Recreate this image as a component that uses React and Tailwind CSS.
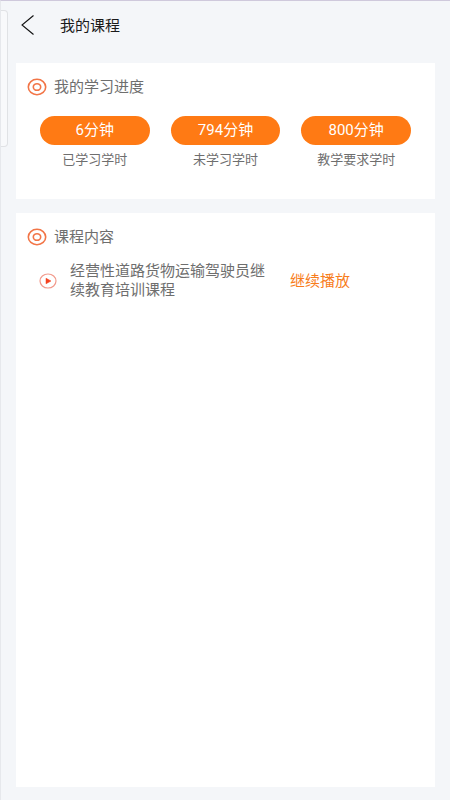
const stats = [
  { value: '6分钟', label: '已学习学时' },
  { value: '794分钟', label: '未学习学时' },
  { value: '800分钟', label: '教学要求学时' },
]

const courses = [{ id: 1, title: '经营性道路货物运输驾驶员继续教育培训课程' }]

function BackIcon() {
  return (
    <svg width="14" height="22" viewBox="0 0 14 22" fill="none" stroke="#111" strokeWidth="1.1" aria-hidden="true">
      <path d="M12.5 1.5 1 11l11.5 9.5" />
    </svg>
  )
}

function TargetIcon() {
  return (
    <svg width="20" height="18" viewBox="0 0 20 18" fill="none" stroke="#f27547" strokeWidth="1.6" aria-hidden="true">
      <ellipse cx="10" cy="9" rx="8.7" ry="7.7" />
      <ellipse cx="10" cy="9" rx="3.7" ry="3.3" />
    </svg>
  )
}

function PlayIcon() {
  return (
    <svg className="shrink-0" width="18" height="16" viewBox="0 0 18 16" aria-hidden="true">
      <ellipse cx="9" cy="8" rx="8" ry="7" fill="none" stroke="#f29a8c" strokeWidth="1.2" />
      <path d="M7 5.2v5.6L12 8z" fill="#f5411f" stroke="#f5411f" strokeWidth="0.5" strokeLinejoin="round" />
    </svg>
  )
}

function SectionTitle({ children }) {
  return (
    <div className="flex items-center gap-[7px] text-[#6e6e6e]">
      <TargetIcon />
      <h2 className="text-[15px] leading-5">{children}</h2>
    </div>
  )
}

export default function App() {
  return (
    <div className="relative flex min-h-screen flex-col border-t border-l border-t-[#cfc9dc] border-l-[#e6e8ec] bg-[#f4f6f9] pr-[15px] pb-[13px] pl-[15px] font-['Roboto','Noto_Sans_CJK_SC',sans-serif]">
      {/* edge panel handle */}
      <div className="absolute top-[9px] left-0 h-[137px] w-[7px] rounded-r-[4px] border border-l-0 border-[#e0e2e5] bg-[#f8f9fb]" />

      <header className="flex h-[62px] items-start gap-[25px] pt-[13px] pl-[5px]">
        <button type="button" aria-label="返回" className="flex h-[22px] items-center">
          <BackIcon />
        </button>
        <h1 className="text-[15px] leading-6 text-[#1a1a1a]">我的课程</h1>
      </header>

      <main className="flex flex-1 flex-col gap-[14px]">
        <section className="bg-white px-[11px] pt-[14px] pb-[30px]">
          <SectionTitle>我的学习进度</SectionTitle>
          <div className="mt-[19px] grid grid-cols-3 gap-[21px] px-[13px]">
            {stats.map((item) => (
              <div key={item.label} className="flex flex-col items-center">
                <div className="w-full rounded-full bg-[#ff7a14] text-center text-[15px] leading-[29px] text-white">
                  {item.value}
                </div>
                <p className="mt-[6px] text-[13px] leading-[18px] whitespace-nowrap text-[#6e6e6e]">{item.label}</p>
              </div>
            ))}
          </div>
        </section>

        <section className="flex-1 bg-white px-[11px] pt-[14px]">
          <SectionTitle>课程内容</SectionTitle>
          <ul className="mt-[15px] pl-3">
            {courses.map((course) => (
              <li key={course.id} className="flex items-center">
                <PlayIcon />
                <p className="ml-[13px] w-[204px] text-[15px] leading-[19px] text-[#6e6e6e]">{course.title}</p>
                <button type="button" className="ml-4 text-[15px] leading-5 text-[#f87d1c]">
                  继续播放
                </button>
              </li>
            ))}
          </ul>
        </section>
      </main>
    </div>
  )
}
